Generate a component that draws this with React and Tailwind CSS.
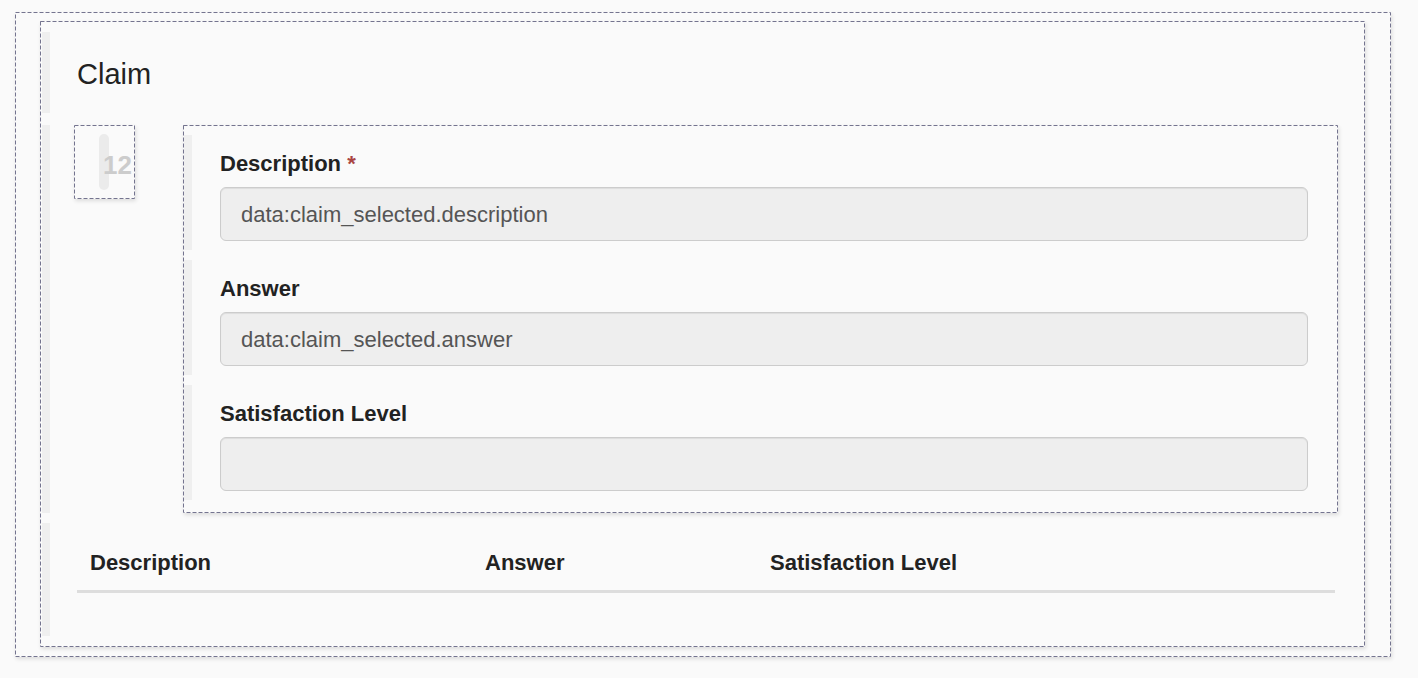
import React from "react";

function Dash() {
  return (
    <svg className="absolute -left-px -top-px w-[calc(100%+2px)] h-[calc(100%+2px)] pointer-events-none overflow-visible" aria-hidden="true">
      <rect
        x="0.5"
        y="0.5"
        className="[width:calc(100%-1px)] [height:calc(100%-1px)]"
        fill="none"
        stroke="#74748f"
        strokeWidth="1"
        strokeDasharray="4 2"
      />
    </svg>
  );
}

function Field({ label, required, value, last }) {
  return (
    <div className={`border-l-8 border-[#efefef] pl-[28px] pr-[29px] pt-[13px] pb-[9px] ${last ? "" : "mb-[10px]"}`}>
      <div className="text-[22px] leading-[31px] font-bold text-[#222] mb-[8px]">
        {label}
        {required && <span className="text-[#a94442]"> *</span>}
      </div>
      <div className="h-[54px] rounded-[6px] border border-[#cccccc] bg-[#eeeeee] shadow-[inset_0_1px_1px_rgba(0,0,0,0.075)] pl-[20px] flex items-center text-[22px] text-[#555]">
        {value}
      </div>
    </div>
  );
}

export default function App() {
  return (
    <div className="w-full h-[678px] bg-[#fafafa] pt-[12px] pl-[15px] pr-[27px] font-['Liberation_Sans',Arial,sans-serif]">
      <div className="relative h-[645px] border border-transparent shadow-[1px_2px_4px_rgba(0,0,0,0.12)] pl-[24px] pr-[25px] pt-[8px] pb-[9px]">
        <Dash />
        <div className="relative h-full border border-transparent shadow-[1px_2px_4px_rgba(0,0,0,0.12)] px-[1px] pt-[10px] pb-[8px]">
          <Dash />
          {/* Row 1 */}
          <div className="border-l-8 border-[#efefef] pl-[27px] pr-[25px] pt-[26px] pb-[23px] mb-[12px]">
            <h4 className="text-[29px] leading-[32px] font-normal text-[#222]">Claim</h4>
          </div>
          {/* Row 2 */}
          <div className="border-l-8 border-[#efefef] pl-[24px] pr-[25px] mb-[10px] flex items-start">
            <div className="relative w-[61px] h-[74px] border border-transparent shadow-[1px_2px_4px_rgba(0,0,0,0.12)] shrink-0">
              <div className="absolute left-[24px] top-[8px] w-[10px] h-[56px] rounded-full bg-[#ebebeb]" />
              <div className="absolute left-[28px] top-[24px] text-[26px] leading-[30px] font-bold text-[#cccccc]">12</div>
              <Dash />
            </div>
            <div className="relative ml-[48px] flex-1 border border-transparent shadow-[1px_2px_4px_rgba(0,0,0,0.12)] pt-[9px] pb-[12px]">
              <Dash />
              <Field label="Description" required value="data:claim_selected.description" />
              <Field label="Answer" value="data:claim_selected.answer" />
              <Field label="Satisfaction Level" value="" last />
            </div>
          </div>
          {/* Row 3 */}
          <div className="border-l-8 border-[#efefef] pl-[27px] pr-[28px] pt-[12px] pb-[43px]">
            <div className="flex border-b-[3px] border-[#dddddd] text-[22px] leading-[31px] font-bold text-[#222]">
              <div className="w-[395px] px-[13px] py-[12px]">Description</div>
              <div className="w-[285px] px-[13px] py-[12px]">Answer</div>
              <div className="flex-1 px-[13px] py-[12px]">Satisfaction Level</div>
            </div>
          </div>
        </div>
      </div>
    </div>
  );
}
